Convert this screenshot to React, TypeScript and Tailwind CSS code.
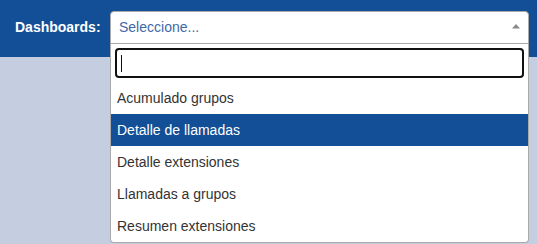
const options = [
  'Acumulado grupos',
  'Detalle de llamadas',
  'Detalle extensiones',
  'Llamadas a grupos',
  'Resumen extensiones',
];

export default function App() {
  return (
    <div className="relative h-[244px] w-[537px] overflow-hidden bg-[#c5cee0] font-['Liberation_Sans',Arial,sans-serif] text-[14px]">
      <header className="flex h-[57px] items-start bg-[#134f97] pl-[15px] pt-[11px]">
        <label className="flex h-[32px] w-[95px] items-center font-bold text-white">Dashboards:</label>
      </header>

      <div className="absolute left-[110px] top-[11px] w-[419px]">
        <div className="flex h-[33px] items-center justify-between rounded-t-[4px] border border-b-[#aaa] border-[#aaa] bg-white pl-[8px] pr-[7px]">
          <span className="text-[#3f68a6]">Seleccione...</span>
          <svg width="10" height="6" viewBox="0 0 10 6" className="mt-[-4px]">
            <path d="M1 5.5 L5 1 L9 5.5 Z" fill="#888" />
          </svg>
        </div>
        <div className="rounded-b-[4px] border border-t-0 border-[#aaa] bg-white">
          <div className="p-[4px]">
            <div className="flex h-[30px] items-center rounded-[4px] border-2 border-[#111] px-[4px]">
              <span className="h-[17px] w-px bg-[#111]" />
            </div>
          </div>
          <ul>
            {options.map((o) => (
              <li
                key={o}
                className={
                  'flex h-[32px] items-center px-[6px] ' +
                  (o === 'Detalle de llamadas' ? 'bg-[#134f97] text-white' : 'text-[#333]')
                }
              >
                {o}
              </li>
            ))}
          </ul>
        </div>
      </div>
    </div>
  );
}
